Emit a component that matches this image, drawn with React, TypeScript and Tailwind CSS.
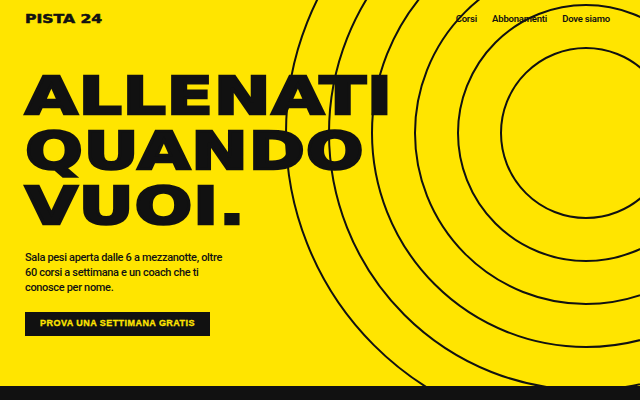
import React from 'react'

// 同心円の半径（中心 586,133）
const RINGS = [85, 128, 171, 214, 257, 300]

const NAV = ['Corsi', 'Abbonamenti', 'Dove siamo']

function Rings() {
  return (
    <svg
      className="pointer-events-none absolute inset-0 h-full w-full"
      viewBox="0 0 640 386"
      preserveAspectRatio="xMinYMin slice"
      fill="none"
    >
      {RINGS.map((r) => (
        <circle key={r} cx="586" cy="133" r={r} stroke="#111111" strokeWidth="2" />
      ))}
    </svg>
  )
}

export default function App() {
  return (
    <div className="flex h-[400px] w-[640px] flex-col overflow-hidden bg-[#ffe500] text-[#111111] [font-family:'Liberation_Sans',Roboto,sans-serif]">
      <section className="relative h-[386px] shrink-0 overflow-hidden">
        <Rings />

        <div className="relative flex h-full flex-col px-[25px]">
          {/* ヘッダー */}
          <header className="flex h-[38px] items-center justify-between">
            <span className="origin-left scale-x-[1.3] text-[12px] font-bold [-webkit-text-stroke:0.5px_#111111] [font-family:'DejaVu_Sans',sans-serif]">
              PISTA 24
            </span>
            <nav className="flex gap-[15px] pr-[5px] text-[9.5px] font-semibold tracking-[-0.02em] [font-family:Roboto,sans-serif]">
              {NAV.map((n) => (
                <a key={n} href="#">
                  {n}
                </a>
              ))}
            </nav>
          </header>

          {/* 見出し */}
          <h1 className="mt-[31px] origin-left scale-x-[1.31] text-[52px] leading-[55px] font-bold tracking-[0.01em] [-webkit-text-stroke:2.5px_#111111] [font-family:'DejaVu_Sans',sans-serif]">
            ALLENATI
            <br />
            QUANDO
            <br />
            VUOI.
          </h1>

          <p className="mt-[16px] text-[11px] leading-[15px] font-medium tracking-[-0.03em] [font-family:Roboto,sans-serif]">
            Sala pesi aperta dalle 6 a mezzanotte, oltre
            <br />
            60 corsi a settimana e un coach che ti
            <br />
            conosce per nome.
          </p>

          <div className="mt-[14px]">
            <button className="h-[24px] w-[185px] bg-[#111111] text-[9px] font-bold tracking-[0.05em] text-[#ffe500] [-webkit-text-stroke:0.3px_#ffe500]">
              PROVA UNA SETTIMANA GRATIS
            </button>
          </div>
        </div>
      </section>

      <footer className="flex-1 bg-[#111111]" />
    </div>
  )
}
